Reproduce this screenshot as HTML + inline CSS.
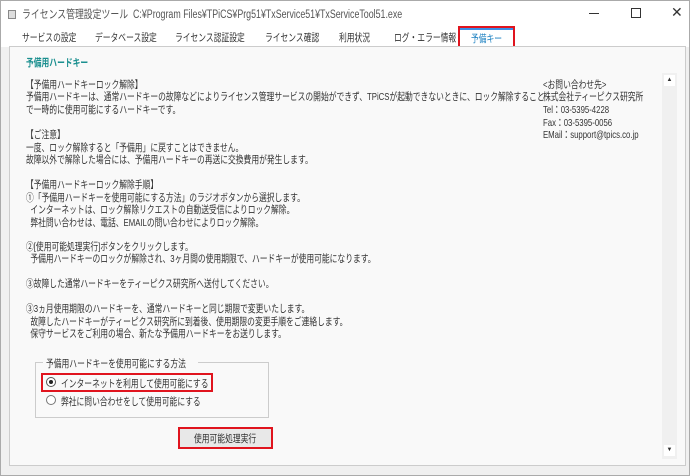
<!DOCTYPE html>
<html><head><meta charset="utf-8"><style>
*{margin:0;padding:0;box-sizing:border-box}
body{width:690px;height:476px;background:#fff;font-family:"Liberation Sans","Noto Sans CJK JP",sans-serif;font-size:10.5px;color:#333;position:relative;overflow:hidden}
.win{position:absolute;left:0;top:0;width:690px;height:476px;border:1px solid #aaa;background:#f0f0f0}
.title{position:absolute;left:0;top:0;width:688px;height:24px;background:#fff}
.abs{position:absolute;white-space:nowrap}
.s{display:inline-block;transform:scaleX(.74);transform-origin:0 0;white-space:nowrap}
.tabs{position:absolute;left:0;top:24px;width:688px;height:22px;background:#fff}
.panel{position:absolute;left:9px;top:46px;width:677px;height:420px;border:1px solid #ccc;background:#f9f9f9}
.t{position:absolute;left:16px;white-space:nowrap;line-height:12px}
.r{position:absolute;left:533px;white-space:nowrap;line-height:12px}
</style></head><body>
<div class="win">
<div class="title">
 <div class="abs" style="left:7px;top:9px;width:8px;height:9px;border:1px solid #888;background:#ddd"></div>
 <div class="abs" style="left:21px;top:5px;color:#555;font-size:11.5px"><span class="s" style="transform:scaleX(.77)">ライセンス管理設定ツール&nbsp; C:¥Program Files¥TPiCS¥Prg51¥TxService51¥TxServiceTool51.exe</span></div>
 <div class="abs" style="left:588px;top:12px;width:10px;height:1px;background:#333"></div>
 <div class="abs" style="left:630px;top:7px;width:10px;height:10px;border:1px solid #333"></div>
 <div class="abs" style="left:670px;top:3px;font-size:14px;color:#333">✕</div>
</div>
<div class="tabs">
 <div class="abs" style="left:21px;top:5px"><span class="s">サービスの設定</span></div>
 <div class="abs" style="left:94px;top:5px"><span class="s">データベース設定</span></div>
 <div class="abs" style="left:174px;top:5px"><span class="s">ライセンス認証設定</span></div>
 <div class="abs" style="left:264px;top:5px"><span class="s">ライセンス確認</span></div>
 <div class="abs" style="left:338px;top:5px"><span class="s">利用状況</span></div>
 <div class="abs" style="left:393px;top:5px"><span class="s">ログ・エラー情報</span></div>
 <div class="abs" style="left:457px;top:1px;width:57px;height:22px;border:2px solid #e0141e;background:#fff"></div>
 <div class="abs" style="left:459px;top:3px;width:53px;height:2px;background:#3a8ee6"></div>
 <div class="abs" style="left:470px;top:6px;color:#1a7fc0"><span class="s">予備キー</span></div>
</div>
</div>
<div class="panel">
 <div class="t" style="top:10px;color:#1a8f8f;font-weight:bold"><span class="s">予備用ハードキー</span></div>
 <div class="t" style="top:32px"><span class="s">【予備用ハードキーロック解除】</span></div>
 <div class="t" style="top:44px"><span class="s">予備用ハードキーは、通常ハードキーの故障などによりライセンス管理サービスの開始ができず、TPiCSが起動できないときに、ロック解除すること</span></div>
 <div class="t" style="top:57px"><span class="s">で一時的に使用可能にするハードキーです。</span></div>
 <div class="t" style="top:82px"><span class="s">【ご注意】</span></div>
 <div class="t" style="top:95px"><span class="s">一度、ロック解除すると「予備用」に戻すことはできません。</span></div>
 <div class="t" style="top:107px"><span class="s">故障以外で解除した場合には、予備用ハードキーの再送に交換費用が発生します。</span></div>
 <div class="t" style="top:132px"><span class="s">【予備用ハードキーロック解除手順】</span></div>
 <div class="t" style="top:145px"><span class="s">①「予備用ハードキーを使用可能にする方法」のラジオボタンから選択します。</span></div>
 <div class="t" style="top:157px"><span class="s">&nbsp;&nbsp;インターネットは、ロック解除リクエストの自動送受信によりロック解除。</span></div>
 <div class="t" style="top:170px"><span class="s">&nbsp;&nbsp;弊社問い合わせは、電話、EMAILの問い合わせによりロック解除。</span></div>
 <div class="t" style="top:194px"><span class="s">②[使用可能処理実行]ボタンをクリックします。</span></div>
 <div class="t" style="top:206px"><span class="s">&nbsp;&nbsp;予備用ハードキーのロックが解除され、3ヶ月間の使用期限で、ハードキーが使用可能になります。</span></div>
 <div class="t" style="top:231px"><span class="s">③故障した通常ハードキーをティーピクス研究所へ送付してください。</span></div>
 <div class="t" style="top:256px"><span class="s">③3ヵ月使用期限のハードキーを、通常ハードキーと同じ期限で変更いたします。</span></div>
 <div class="t" style="top:269px"><span class="s">&nbsp;&nbsp;故障したハードキーがティーピクス研究所に到着後、使用期限の変更手順をご連絡します。</span></div>
 <div class="t" style="top:281px"><span class="s">&nbsp;&nbsp;保守サービスをご利用の場合、新たな予備用ハードキーをお送りします。</span></div>
 <div class="r" style="top:32px"><span class="s">&lt;お問い合わせ先&gt;</span></div>
 <div class="r" style="top:44px"><span class="s">株式会社ティーピクス研究所</span></div>
 <div class="r" style="top:57px"><span class="s">Tel：03-5395-4228</span></div>
 <div class="r" style="top:70px"><span class="s">Fax：03-5395-0056</span></div>
 <div class="r" style="top:82px"><span class="s">EMail：support@tpics.co.jp</span></div>
 <div class="abs" style="left:652px;top:26px;width:15px;height:386px;background:#f0f0f0"></div>
 <div class="abs" style="left:654px;top:28px;width:11px;height:11px;background:#fff;font-size:6px;text-align:center;line-height:11px">▲</div>
 <div class="abs" style="left:654px;top:398px;width:11px;height:11px;background:#fff;font-size:6px;text-align:center;line-height:11px">▼</div>
 <div class="abs" style="left:25px;top:315px;width:234px;height:56px;border:1px solid #ccc"></div>
 <div class="abs" style="left:33px;top:309px;background:#f9f9f9;padding:0 3px;width:155px;height:13px"><span class="s">予備用ハードキーを使用可能にする方法</span></div>
 <div class="abs" style="left:31px;top:326px;width:172px;height:19px;border:2px solid #e0141e"></div>
 <div class="abs" style="left:36px;top:330px;width:10px;height:10px;border:1px solid #555;border-radius:50%;background:#fff"><div style="margin:2px;width:4px;height:4px;border-radius:50%;background:#222"></div></div>
 <div class="abs" style="left:51px;top:329px"><span class="s">インターネットを利用して使用可能にする</span></div>
 <div class="abs" style="left:36px;top:348px;width:10px;height:10px;border:1px solid #777;border-radius:50%;background:#fff"></div>
 <div class="abs" style="left:51px;top:347px"><span class="s">弊社に問い合わせをして使用可能にする</span></div>
 <div class="abs" style="left:168px;top:380px;width:95px;height:22px;border:2px solid #e0141e;background:#e8e8e8"></div>
 <div class="abs" style="left:184px;top:384px"><span class="s">使用可能処理実行</span></div>
</div>
</body></html>
